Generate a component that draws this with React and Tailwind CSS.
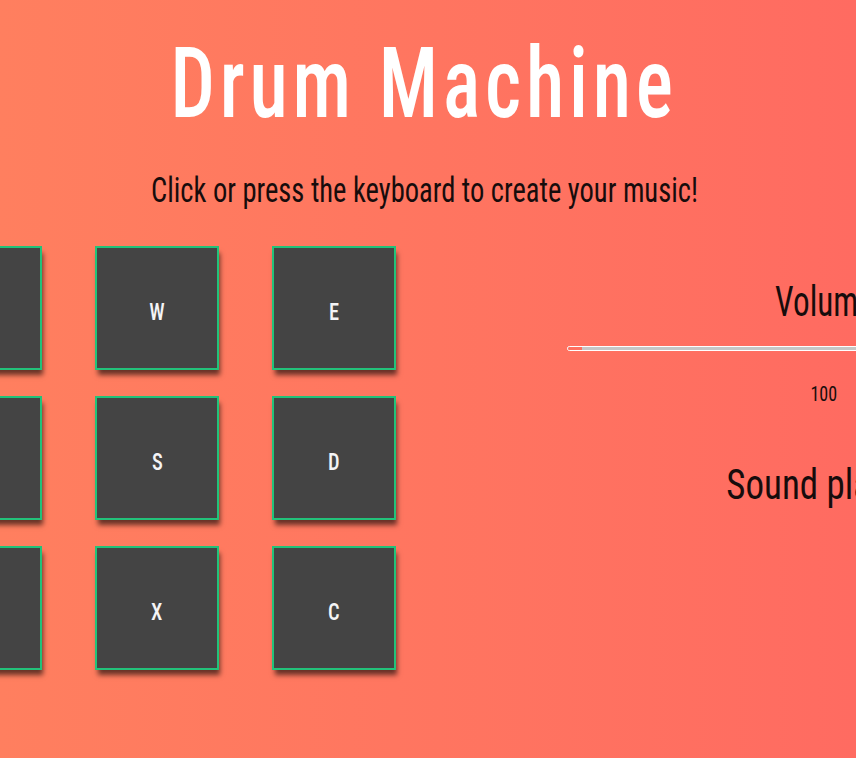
import React from 'react';

const KEYS = ['Q', 'W', 'E', 'A', 'S', 'D', 'Z', 'X', 'C'];

function Pad({ k }) {
  return (
    <button className="w-[124px] h-[124px] bg-[#444444] border-2 border-[#22c27a] shadow-[2px_6px_5px_-1px_rgba(0,0,0,0.6)] flex items-center justify-center pt-[7px] text-[24px] leading-none font-[460] text-[#f4f4f6]">
      <span className="inline-block scale-x-[0.85]">{k}</span>
    </button>
  );
}

export default function App() {
  return (
    <div
      className="min-h-[758px] w-full overflow-hidden pr-[8px] flex flex-col items-center bg-linear-to-r from-[#ff7f5f] to-[#ff6b61] text-[#170c0c] font-stretch-condensed"
      style={{ fontFamily: 'Roboto, sans-serif' }}
    >
      <h1 className="mt-[35px] text-[98px] leading-[98px] tracking-[6px] font-medium text-white">
        <span className="inline-block scale-x-[0.8]">Drum Machine</span>
      </h1>
      <p className="mt-[40px] text-[35px] leading-[35px] font-[450]">
        <span className="inline-block scale-x-[0.815]">Click or press the keyboard to create your music!</span>
      </p>

      <div className="mt-[38px] w-[1012px] shrink-0 flex">
        {/* Pads */}
        <div className="grid grid-cols-[repeat(3,124px)] gap-x-[53px] gap-y-[26px] shrink-0">
          {KEYS.map(k => <Pad key={k} k={k} />)}
        </div>

        {/* Controls */}
        <div className="ml-[171px] w-[514px] shrink-0 flex flex-col items-center font-[450]">
          <h2 className="mt-[35px] text-[42px] leading-[42px]">
            <span className="inline-block scale-x-[0.79]">Volume</span>
          </h2>
          <div className="mt-[23px] w-full h-[5px] rounded-full border border-white bg-[#c6c6c6] overflow-hidden">
            <div className="w-[14px] h-full bg-[#ff6f5f]" />
          </div>
          <span className="mt-[33px] text-[20px] leading-[20px] font-normal">
            <span className="inline-block scale-x-[0.9]">100</span>
          </span>
          <h2 className="mt-[60px] text-[42px] leading-[42px]">
            <span className="inline-block scale-x-[0.88]">Sound played</span>
          </h2>
        </div>
      </div>
    </div>
  );
}
